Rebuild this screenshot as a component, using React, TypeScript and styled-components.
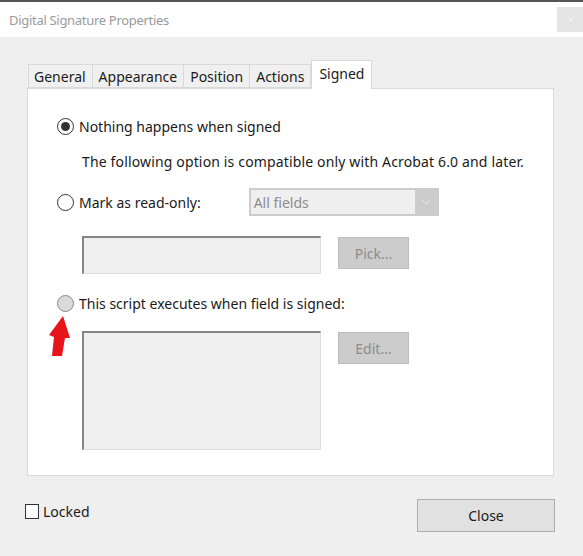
import styled, { createGlobalStyle } from "styled-components";

const GlobalStyle = createGlobalStyle`
    html, body {
        margin: 0;
        padding: 0;
        background: #efefef;
    }
    * {
        box-sizing: border-box;
    }
`

const Window = styled.div`
    width: 583px;
    height: 556px;
    display: flex;
    flex-direction: column;
    background-color: #efefef;
    border-top: 2px solid #555555;
    font-family: "Noto Sans", "Open Sans", sans-serif;
    font-size: 14px;
    color: #1a1a1a;
    overflow: hidden;
`

const TitleBar = styled.div`
    height: 35px;
    display: flex;
    align-items: center;
    justify-content: space-between;
    background-color: #ffffff;
    padding-left: 9px;
`

const TitleText = styled.span`
    font-size: 13px;
    letter-spacing: -0.3px;
    color: #9a9a9a;
`

const CloseX = styled.div`
    width: 28px;
    height: 25px;
    margin-right: -2px;
    background-color: #e4e4e4;
    color: #f6f6f6;
    display: flex;
    align-items: center;
    justify-content: center;
    font-size: 12px;
`

const Body = styled.div`
    flex: 1;
    display: flex;
    flex-direction: column;
    padding: 23px 29px 0 27px;
`

const TabBar = styled.div`
    display: flex;
    align-items: flex-end;
    padding-left: 1px;
    height: 28px;
`

const Tab = styled.div<{ $active?: boolean }>`
    height: ${p => (p.$active ? "29px" : "24px")};
    padding: ${p => (p.$active ? "0 7px 3px" : "0 6px")};
    display: flex;
    align-items: center;
    background-color: ${p => (p.$active ? "#ffffff" : "#f0f0f0")};
    border: 1px solid #d9d9d9;
    border-bottom: ${p => (p.$active ? "none" : "1px solid #d9d9d9")};
    border-left: ${p => (p.$active ? "1px solid #d9d9d9" : "none")};
    margin-bottom: ${p => (p.$active ? "-1px" : "0")};
    position: relative;
    z-index: ${p => (p.$active ? 2 : 1)};
    font-size: 14px;
    color: #1a1a1a;

    &:first-child {
        border-left: 1px solid #d9d9d9;
        padding-left: 5px;
    }
`

const Panel = styled.div`
    position: relative;
    height: 388px;
    background-color: #ffffff;
    border: 1px solid #d9d9d9;
    padding: 28px 0 0 29px;
    display: flex;
    flex-direction: column;
`

const RadioRow = styled.label<{ $mt?: number }>`
    display: flex;
    align-items: center;
    gap: 5px;
    margin-top: ${p => p.$mt ?? 0}px;
    height: 18px;
    font-size: 14px;
`

const Radio = styled.span<{ $checked?: boolean; $dim?: boolean }>`
    width: 17px;
    height: 17px;
    border-radius: 50%;
    border: 1px solid ${p => (p.$dim ? "#8a8a8a" : "#333333")};
    background-color: ${p => (p.$dim ? "#dadada" : "#ffffff")};
    display: flex;
    align-items: center;
    justify-content: center;
    flex-shrink: 0;

    &::after {
        content: "";
        width: 9px;
        height: 9px;
        border-radius: 50%;
        background-color: #333333;
        display: ${p => (p.$checked ? "block" : "none")};
    }
`

const Note = styled.div`
    margin-top: 17px;
    padding-left: 25px;
    font-size: 14px;
    letter-spacing: 0.15px;
    line-height: 20px;
`

const SplitRow = styled.div<{ $mt?: number }>`
    display: flex;
    align-items: center;
    margin-top: ${p => p.$mt ?? 0}px;
`

const Select = styled.div`
    width: 190px;
    height: 28px;
    margin-left: 48px;
    background-color: #cccccc;
    padding: 2px;
    display: flex;
`

const SelectValue = styled.div`
    flex: 1;
    background-color: #efefef;
    color: #8c8c8c;
    font-size: 14px;
    display: flex;
    align-items: center;
    padding-left: 3px;
`

const SelectArrow = styled.div`
    width: 22px;
    display: flex;
    align-items: center;
    justify-content: center;
`

const FieldRow = styled.div<{ $mt: number }>`
    display: flex;
    align-items: flex-start;
    gap: 17px;
    margin-top: ${p => p.$mt}px;
    padding-left: 25px;
`

const TextBox = styled.div<{ $h: number }>`
    width: 239px;
    height: ${p => p.$h}px;
    background-color: #f0f0f0;
    border-top: 2px solid #858585;
    border-left: 2px solid #858585;
    border-right: 1px solid #dedede;
    border-bottom: 1px solid #dedede;
`

const GrayButton = styled.div<{ $mt?: number }>`
    width: 71px;
    height: 32px;
    margin-top: ${p => p.$mt ?? 0}px;
    background-color: #cccccc;
    border: 1px solid #bdbdbd;
    color: #8c8c8c;
    font-size: 14px;
    display: flex;
    align-items: center;
    justify-content: center;
`

const Arrow = styled.svg`
    position: absolute;
    left: 20px;
    top: 225px;
`

const Footer = styled.div`
    display: flex;
    align-items: flex-start;
    justify-content: space-between;
    padding-top: 23px;
`

const CheckRow = styled.label`
    display: flex;
    align-items: center;
    gap: 4px;
    margin-top: 3px;
    margin-left: -2px;
    font-size: 14px;
`

const Checkbox = styled.span`
    width: 14px;
    height: 15px;
    border: 1px solid #333333;
    background-color: #ffffff;
`

const CloseButton = styled.div`
    width: 138px;
    height: 33px;
    margin-right: -1px;
    background-color: #e1e1e1;
    border: 1px solid #adadad;
    font-size: 14px;
    display: flex;
    align-items: center;
    justify-content: center;
`

const tabs = ["General", "Appearance", "Position", "Actions", "Signed"];

function App(): JSX.Element {
    return (
        <>
        <GlobalStyle />
        <Window>
            <TitleBar>
                <TitleText>Digital Signature Properties</TitleText>
                <CloseX>×</CloseX>
            </TitleBar>
            <Body>
                <TabBar>
                    {tabs.map(t => (
                        <Tab key={t} $active={t === "Signed"}>{t}</Tab>
                    ))}
                </TabBar>
                <Panel>
                    <RadioRow>
                        <Radio $checked />
                        Nothing happens when signed
                    </RadioRow>
                    <Note>The following option is compatible only with Acrobat 6.0 and later.</Note>
                    <SplitRow $mt={16}>
                        <RadioRow>
                            <Radio />
                            Mark as read-only:
                        </RadioRow>
                        <Select>
                            <SelectValue>All fields</SelectValue>
                            <SelectArrow>
                                <svg width="10" height="6" viewBox="0 0 10 6">
                                    <path d="M0.5 0.5 L5 5 L9.5 0.5" fill="none" stroke="#e6e6e6" strokeWidth="1" />
                                </svg>
                            </SelectArrow>
                        </Select>
                    </SplitRow>
                    <FieldRow $mt={20}>
                        <TextBox $h={38} />
                        <GrayButton $mt={1}>Pick...</GrayButton>
                    </FieldRow>
                    <RadioRow $mt={20}>
                        <Radio $dim />
                        This script executes when field is signed:
                    </RadioRow>
                    <FieldRow $mt={19}>
                        <TextBox $h={119} />
                        <GrayButton $mt={1}>Edit...</GrayButton>
                    </FieldRow>
                    <Arrow width="24" height="44" viewBox="0 0 24 44">
                        <polygon points="15,2 22,24 17,24 14,42 4,42 6,23 1,21" fill="#e8141b" />
                    </Arrow>
                </Panel>
                <Footer>
                    <CheckRow>
                        <Checkbox />
                        Locked
                    </CheckRow>
                    <CloseButton>Close</CloseButton>
                </Footer>
            </Body>
        </Window>
        </>
    )
}

export default App;
